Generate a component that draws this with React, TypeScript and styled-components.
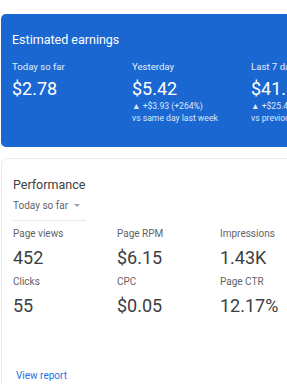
import React from "react";
import styled, { createGlobalStyle } from "styled-components";

const Global = createGlobalStyle`
  *, *::before, *::after { box-sizing: border-box; }
  html, body { margin: 0; padding: 0; background: #ffffff; }
  body { font-family: Roboto, "Noto Sans", Arial, sans-serif; width: 287px; height: 384px; overflow: hidden; }
`;

const Page = styled.div`
  display: flex;
  flex-direction: column;
  gap: 11px;
  padding: 14px 0 0 1px;
  width: 320px;
`;

const BlueCard = styled.section`
  background: #1a67d2;
  border-radius: 5px;
  padding: 18px 0 0 11px;
  height: 133px;
  color: #fff;
`;

const CardTitle = styled.h2<{ $dark?: boolean }>`
  margin: 0;
  font-size: 12.5px;
  font-weight: 400;
  color: ${(p) => (p.$dark ? "#3c4043" : "#fff")};
  line-height: 15px;
`;

const EarnRow = styled.div`
  display: grid;
  grid-template-columns: 120px 119px 120px;
  margin-top: 14px;
`;

const EarnCol = styled.div`
  display: flex;
  flex-direction: column;
`;

const EarnLabel = styled.div`
  font-size: 9.6px;
  line-height: 12px;
  color: #e3ecfb;
`;

const EarnValue = styled.div`
  font-size: 18px;
  line-height: 22px;
  margin-top: 5px;
`;

const EarnNote = styled.div`
  font-size: 8.6px;
  line-height: 12px;
  color: #dce7fa;
  white-space: nowrap;
  &:first-of-type { margin-top: 6px; }
`;

const PerfCard = styled.section`
  border: 1px solid #e8eaed;
  border-right: none;
  border-radius: 6px 0 0 6px;
  padding: 18px 0 16px 11px;
  height: 241px;
  display: flex;
  flex-direction: column;
`;

const Picker = styled.div`
  display: flex;
  align-items: center;
  gap: 6px;
  width: 73px;
  margin-top: 7px;
  padding-bottom: 8px;
  border-bottom: 1px solid #e6e8eb;
  font-size: 10px;
  line-height: 13px;
  color: #5f6368;
`;

const Caret = styled.span`
  width: 0;
  height: 0;
  border-left: 3px solid transparent;
  border-right: 3px solid transparent;
  border-top: 3px solid #9aa0a6;
`;

const MetricGrid = styled.div`
  display: grid;
  grid-template-columns: 104px 103px 80px;
  row-gap: 7px;
  margin-top: 7px;
`;

const Metric = styled.div`
  display: flex;
  flex-direction: column;
`;

const MetricLabel = styled.div`
  font-size: 10px;
  line-height: 12px;
  color: #5f6368;
`;

const MetricValue = styled.div`
  font-size: 18px;
  line-height: 22px;
  color: #3c4043;
  margin-top: 7px;
`;

const Link = styled.a`
  margin-top: auto;
  padding-left: 3px;
  font-size: 10px;
  line-height: 13px;
  color: #1a73e8;
  text-decoration: none;
`;

const earnings = [
  { label: "Today so far", value: "$2.78" },
  { label: "Yesterday", value: "$5.42", change: "▲ +$3.93 (+264%)", note: "vs same day last week" },
  { label: "Last 7 days", value: "$41.57", change: "▲ +$25.41 (+157%)", note: "vs previous 7 days" },
];

const metrics = [
  { label: "Page views", value: "452" },
  { label: "Page RPM", value: "$6.15" },
  { label: "Impressions", value: "1.43K" },
  { label: "Clicks", value: "55" },
  { label: "CPC", value: "$0.05" },
  { label: "Page CTR", value: "12.17%" },
];

export default function App() {
  return (
    <>
      <Global />
      <Page>
        <BlueCard>
          <CardTitle>Estimated earnings</CardTitle>
          <EarnRow>
            {earnings.map((e) => (
              <EarnCol key={e.label}>
                <EarnLabel>{e.label}</EarnLabel>
                <EarnValue>{e.value}</EarnValue>
                {e.change && <EarnNote>{e.change}</EarnNote>}
                {e.note && <EarnNote>{e.note}</EarnNote>}
              </EarnCol>
            ))}
          </EarnRow>
        </BlueCard>
        <PerfCard>
          <CardTitle $dark>Performance</CardTitle>
          <Picker>
            Today so far <Caret />
          </Picker>
          <MetricGrid>
            {metrics.map((m) => (
              <Metric key={m.label}>
                <MetricLabel>{m.label}</MetricLabel>
                <MetricValue>{m.value}</MetricValue>
              </Metric>
            ))}
          </MetricGrid>
          <Link href="#">View report</Link>
        </PerfCard>
      </Page>
    </>
  );
}
